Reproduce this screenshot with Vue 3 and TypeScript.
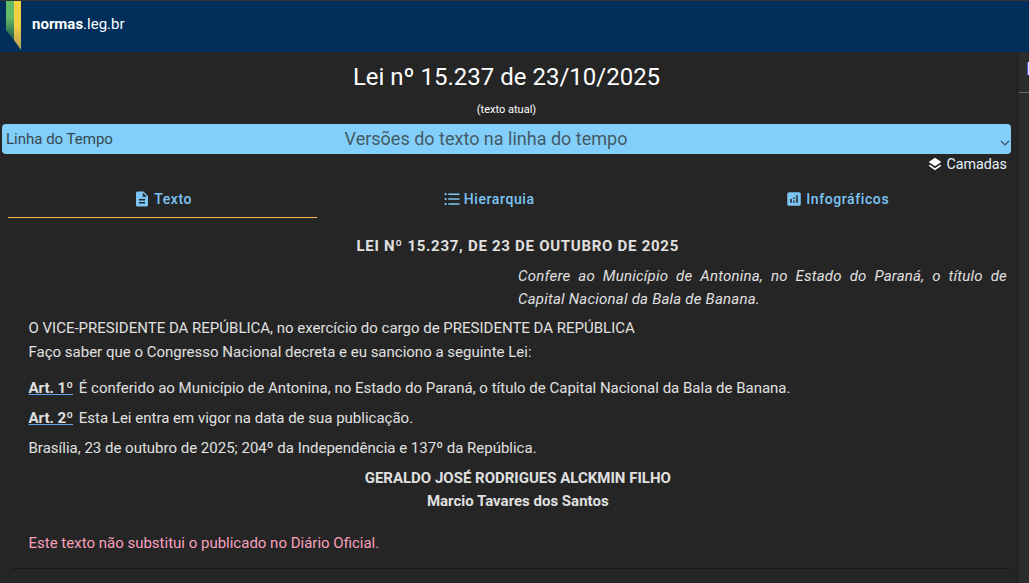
<script setup lang="ts">
const tabs = ['Texto', 'Hierarquia', 'Infográficos']
</script>

<template>
  <div class="page">
    <header class="topbar">
      <svg class="flag" width="22" height="50" viewBox="0 0 22 50">
        <defs>
          <linearGradient id="g" x1="0" y1="0" x2="0" y2="1">
            <stop offset="0" stop-color="#66bb6a" />
            <stop offset="0.4" stop-color="#66bb6a" />
            <stop offset="1" stop-color="#1f5a4a" />
          </linearGradient>
          <linearGradient id="y" x1="0" y1="0" x2="0" y2="1">
            <stop offset="0" stop-color="#f3d03e" />
            <stop offset="0.5" stop-color="#f0cf45" />
            <stop offset="1" stop-color="#b9a05a" />
          </linearGradient>
        </defs>
        <polygon points="6,0 14,0 14,39 6,29" fill="url(#g)" />
        <polygon points="14,0 21,0 21,49 14,39" fill="url(#y)" />
      </svg>
      <span class="brand"><b>normas</b>.leg.br</span>
    </header>

    <div class="body">
      <main class="content">
        <h1 class="title">Lei nº 15.237 de 23/10/2025</h1>
        <div class="subtitle">(texto atual)</div>

        <div class="timeline">
          <span class="timeline-label">Linha do Tempo</span>
          <span class="timeline-center">Versões do texto na linha do tempo</span>
          <svg class="chevron" width="10" height="6" viewBox="0 0 10 6">
            <path d="M1 1l4 4 4-4" fill="none" stroke="#3d4f5c" stroke-width="1.2" />
          </svg>
        </div>

        <div class="layers">
          <svg width="16" height="16" viewBox="0 0 24 24" fill="#fff">
            <path d="M12 15.500l9.500-6.500L12 2.500 2.500 9l9.500 6.500zm0 2.900l-7.600-5.200L2.500 14.500 12 21.500l9.500-7-1.900-1.300L12 18.400z" />
          </svg>
          <span>Camadas</span>
        </div>

        <nav class="tabs">
          <div v-for="(t, i) in tabs" :key="t" class="tab" :class="{ active: i === 0 }">
            <svg v-if="i === 0" width="18" height="18" viewBox="0 0 24 24" fill="#7cc5f5">
              <path d="M14 2H6a2 2 0 0 0-2 2v16a2 2 0 0 0 2 2h12a2 2 0 0 0 2-2V8l-6-6zm2 16H8v-2h8v2zm0-4H8v-2h8v2zm-3-5V3.500L18.500 9H13z" />
            </svg>
            <svg v-else-if="i === 1" width="18" height="18" viewBox="0 0 24 24" fill="#7cc5f5">
              <path d="M7 4.500h15v2H7zM7 11h15v2H7zM7 17.500h15v2H7z" />
              <circle cx="3.500" cy="5.500" r="1.500" />
              <circle cx="3.500" cy="12" r="1.500" />
              <circle cx="3.500" cy="18.500" r="1.500" />
            </svg>
            <svg v-else width="18" height="18" viewBox="0 0 24 24" fill="#7cc5f5">
              <path d="M19 3H5a2 2 0 0 0-2 2v14a2 2 0 0 0 2 2h14a2 2 0 0 0 2-2V5a2 2 0 0 0-2-2zM9 17H7v-5h2v5zm4 0h-2v-3h2v3zm0-5h-2v-2h2v2zm4 5h-2V7h2v10z" />
            </svg>
            <span>{{ t }}</span>
          </div>
        </nav>

        <article class="norma">
          <h2 class="ementa-title">LEI Nº 15.237, DE 23 DE OUTUBRO DE 2025</h2>
          <p class="ementa">Confere ao Município de Antonina, no Estado do Paraná, o título de Capital Nacional da Bala de Banana.</p>

          <p class="preamble">
            O VICE-PRESIDENTE DA REPÚBLICA, no exercício do cargo de PRESIDENTE DA REPÚBLICA<br />
            Faço saber que o Congresso Nacional decreta e eu sanciono a seguinte Lei:
          </p>

          <p class="art first"><a class="art-link">Art. 1º</a> É conferido ao Município de Antonina, no Estado do Paraná, o título de Capital Nacional da Bala de Banana.</p>
          <p class="art"><a class="art-link">Art. 2º</a> Esta Lei entra em vigor na data de sua publicação.</p>
          <p class="art">Brasília, 23 de outubro de 2025; 204º da Independência e 137º da República.</p>

          <p class="signers">
            GERALDO JOSÉ RODRIGUES ALCKMIN FILHO<br />
            Marcio Tavares dos Santos
          </p>

          <p class="notice">Este texto não substitui o publicado no Diário Oficial.</p>
        </article>
      </main>

      <aside class="side">
        <div class="side-head"><span class="side-mark"></span></div>
      </aside>
    </div>
  </div>
</template>

<style>
html,
body {
  margin: 0;
  background: #252525;
  overflow: hidden;
}
</style>

<style scoped>
.page {
  width: 1029px;
  height: 583px;
  overflow: hidden;
  background: #252525;
  color: #e0e0e0;
  font-family: Roboto, "Liberation Sans", sans-serif;
  font-size: 15px;
}

.topbar {
  height: 52px;
  box-sizing: border-box;
  border-top: 1px solid #333;
  background: #002f5c;
  display: flex;
  align-items: flex-start;
}

.flag {
  display: block;
  flex: none;
}

.brand {
  margin-left: 10px;
  margin-top: 14px;
  line-height: 18px;
  font-size: 15px;
  color: #fff;
}

.brand b {
  font-weight: 700;
}

.body {
  display: flex;
  height: 531px;
}

.content {
  width: 1019px;
  flex: none;
  box-sizing: border-box;
  padding: 0 8px 0 2px;
}

.title {
  margin: 10px 0 0;
  font-size: 24px;
  font-weight: 400;
  line-height: 30px;
  text-align: center;
  color: #fff;
}

.subtitle {
  margin-top: 11px;
  font-size: 11px;
  line-height: 14px;
  text-align: center;
  color: #fff;
}

.timeline {
  position: relative;
  margin-top: 7px;
  height: 30px;
  width: 1009px;
  border-radius: 4px;
  background: #81cffa;
  color: #37474f;
  display: flex;
  align-items: center;
  justify-content: center;
}

.timeline-label {
  position: absolute;
  left: 4px;
  top: 6px;
  font-size: 15px;
  line-height: 19px;
}

.timeline-center {
  font-size: 18px;
  line-height: 30px;
  margin-left: -41px;
  color: #455a64;
}

.chevron {
  position: absolute;
  right: 1px;
  bottom: 8px;
}

.layers {
  width: 1005px;
  margin-top: 1px;
  height: 17px;
  display: flex;
  justify-content: flex-end;
  align-items: center;
  gap: 3px;
  font-size: 14.300px;
  color: #e3f2fd;
}

.tabs {
  display: flex;
  width: 1006.500px;
  margin: 10px 0 0 6px;
  height: 36px;
}

.tab {
  flex: 1 1 auto;
  height: 36px;
  box-sizing: border-box;
  display: flex;
  justify-content: center;
  align-items: center;
  gap: 3px;
  padding-bottom: 3px;
  font-size: 14px;
  font-weight: 500;
  letter-spacing: 0.6px;
  color: #7cc5f5;
}

.tab.active {
  border-bottom: 1px solid #ffb74d;
  padding-bottom: 2px;
}

.norma {
  width: 999px;
  margin-left: 10px;
  box-sizing: border-box;
  padding: 0 4px 0 16.500px;
  height: 351px;
  border-bottom: 1px solid #191919;
}

.ementa-title {
  margin: 0;
  padding-top: 18px;
  font-size: 15px;
  font-weight: 700;
  letter-spacing: 0.72px;
  line-height: 20px;
  text-align: center;
  color: #e0e0e0;
}

.ementa {
  margin: 9px 0 0 489.500px;
  font-style: italic;
  line-height: 23px;
  letter-spacing: 0.22px;
  text-align: justify;
}

.preamble {
  margin: 5px 0 0;
  line-height: 24px;
}

.art {
  margin: 12px 0 0;
  line-height: 18px;
}

.art.first {
  margin-top: 15px;
}

.art-link {
  font-weight: 700;
  color: #e0e0e0;
  text-decoration: underline;
  text-decoration-color: #64a0f0;
  margin-right: 2px;
}

.signers {
  margin: 10px 0 0;
  font-weight: 700;
  line-height: 23px;
  text-align: center;
}

.notice {
  margin: 20px 0 0;
  line-height: 20px;
  color: #f8a0bc;
}

.side {
  flex: 1;
  background: #2c2c2c;
  border-radius: 4px 0 0 0;
}

.side-head {
  height: 40px;
  border-bottom: 1px solid #666;
  position: relative;
}

.side-mark {
  position: absolute;
  left: 8px;
  top: 10px;
  width: 1px;
  height: 13px;
  background: #4a5ae0;
  border-right: 1px solid #d8dcff;
}
</style>
